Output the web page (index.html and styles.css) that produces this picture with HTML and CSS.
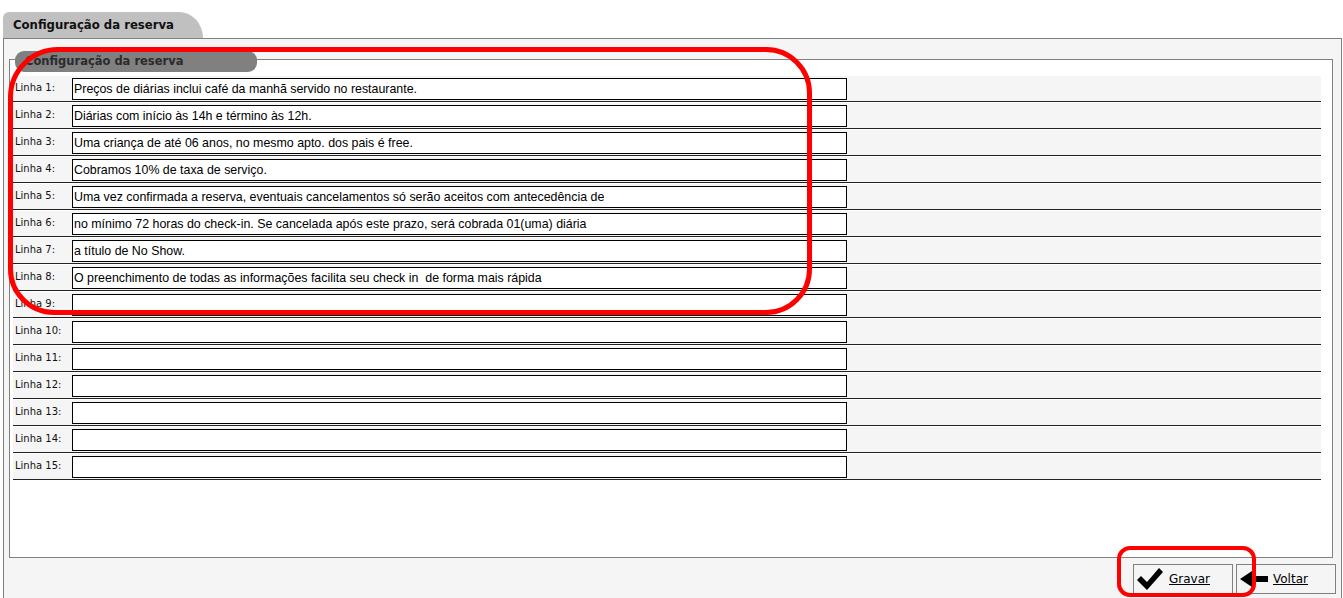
FILE: index.html
```html
<!DOCTYPE html>
<html lang="pt-BR">
<head>
  <meta charset="UTF-8">
  <title>Configuração da reserva</title>
  <link rel="stylesheet" href="styles.css">
</head>
<body>

<div class="tab">Configuração da reserva</div>

<div class="outer">
  <div class="inner">
    <div class="legend">Configuração da reserva</div>

    <div class="rows">
      <div class="row"><span class="label">Linha 1:</span><input class="field" type="text" value="Preços de diárias inclui café da manhã servido no restaurante."><span class="rest"></span></div>
      <div class="row"><span class="label">Linha 2:</span><input class="field" type="text" value="Diárias com início às 14h e término às 12h."><span class="rest"></span></div>
      <div class="row"><span class="label">Linha 3:</span><input class="field" type="text" value="Uma criança de até 06 anos, no mesmo apto. dos pais é free."><span class="rest"></span></div>
      <div class="row"><span class="label">Linha 4:</span><input class="field" type="text" value="Cobramos 10% de taxa de serviço."><span class="rest"></span></div>
      <div class="row"><span class="label">Linha 5:</span><input class="field" type="text" value="Uma vez confirmada a reserva, eventuais cancelamentos só serão aceitos com antecedência de"><span class="rest"></span></div>
      <div class="row"><span class="label">Linha 6:</span><input class="field" type="text" value="no mínimo 72 horas do check-in. Se cancelada após este prazo, será cobrada 01(uma) diária"><span class="rest"></span></div>
      <div class="row"><span class="label">Linha 7:</span><input class="field" type="text" value="a título de No Show."><span class="rest"></span></div>
      <div class="row"><span class="label">Linha 8:</span><input class="field" type="text" value="O preenchimento de todas as informações facilita seu check in  de forma mais rápida"><span class="rest"></span></div>
      <div class="row"><span class="label">Linha 9:</span><input class="field" type="text" value=""><span class="rest"></span></div>
      <div class="row"><span class="label">Linha 10:</span><input class="field" type="text" value=""><span class="rest"></span></div>
      <div class="row"><span class="label">Linha 11:</span><input class="field" type="text" value=""><span class="rest"></span></div>
      <div class="row"><span class="label">Linha 12:</span><input class="field" type="text" value=""><span class="rest"></span></div>
      <div class="row"><span class="label">Linha 13:</span><input class="field" type="text" value=""><span class="rest"></span></div>
      <div class="row"><span class="label">Linha 14:</span><input class="field" type="text" value=""><span class="rest"></span></div>
      <div class="row"><span class="label">Linha 15:</span><input class="field" type="text" value=""><span class="rest"></span></div>
    </div>
  </div>

  <div class="actions">
    <a class="btn" href="#">
      <svg width="26" height="24" viewBox="0 0 26 24"><polygon points="0,13 4,9 10,15 22,1 26,5 10,23" fill="#000"/></svg>
      <span>Gravar</span>
    </a>
    <a class="btn" href="#">
      <svg width="28" height="16" viewBox="0 0 28 16"><polygon points="0,8 12,0 12,5 28,5 28,11 12,11 12,16" fill="#000"/></svg>
      <span>Voltar</span>
    </a>
  </div>
</div>

<!-- red highlight marks drawn over the page -->
<div class="mark mark-rows"></div>
<div class="mark mark-save"></div>

</body>
</html>
```

FILE: styles.css
```css
html, body {
  margin: 0;
  padding: 0;
  overflow: hidden;
}

body {
  background: #fff;
  font-family: "DejaVu Sans", Verdana, sans-serif;
  padding-top: 12px;
  position: relative;
  height: 598px;
}

.tab {
  margin-left: 3px;
  width: 200px;
  height: 26px;
  box-sizing: border-box;
  padding-left: 10px;
  background: #c0c0c0;
  border-top-left-radius: 6px;
  border-top-right-radius: 24px 26px;
  font-size: 11.7px;
  font-weight: bold;
  line-height: 26px;
  color: #111;
}

.outer {
  margin-left: 3px;
  width: 1339px;
  height: 560px;
  box-sizing: border-box;
  border: 1px solid #808080;
  border-bottom: none;
  background: #f5f5f5;
  padding: 20px 5px 0 5px;
}

.inner {
  width: 1324px;
  height: 499px;
  box-sizing: border-box;
  border: 1px solid #808080;
  background: #fff;
}

.legend {
  margin: -9px 0 0 5px;
  width: 242px;
  height: 21px;
  box-sizing: border-box;
  padding-left: 10px;
  background: #808080;
  border-radius: 9px;
  font-size: 11.5px;
  font-weight: bold;
  line-height: 20px;
  color: #2b2b2b;
}

.rows {
  margin: 4px 0 0 3px;
  width: 1308px;
}

.row {
  display: flex;
  height: 26px;
  box-sizing: border-box;
  margin-bottom: 1px;
  border-bottom: 1px solid #222;
  background: #f5f5f5;
}

.label {
  width: 59px;
  box-sizing: border-box;
  padding: 0 0 2px 2px;
  display: flex;
  align-items: center;
  font-size: 10px;
  color: #111;
}

.field {
  width: 775px;
  height: 22px;
  box-sizing: border-box;
  margin: 2px 0 0 0;
  padding: 0 1px;
  border: 1px solid #000;
  background: #fff;
  font-family: "Liberation Sans", Arial, sans-serif;
  font-size: 12.4px;
  color: #000;
  outline: none;
}

.rest {
  flex: 1;
}

.actions {
  display: flex;
  justify-content: flex-end;
  gap: 3px;
  margin-top: 6px;
}

.btn {
  display: flex;
  align-items: center;
  gap: 6px;
  width: 100px;
  height: 30px;
  box-sizing: border-box;
  padding-left: 3px;
  border: 1px solid #808080;
  background: #f5f5f5;
  color: #000;
  font-size: 12px;
  text-decoration: underline;
}

.btn + .btn {
  gap: 5px;
}

/* highlight marks */
.mark {
  position: absolute;
  box-sizing: border-box;
  border: 5px solid #ff0000;
}

.mark-rows {
  left: 8px;
  top: 47px;
  width: 804px;
  height: 268px;
  border-radius: 50px 46px 46px 46px;
}

.mark-save {
  left: 1117px;
  top: 546px;
  width: 139px;
  height: 51px;
  border-width: 4px;
  border-radius: 13px;
}
```
